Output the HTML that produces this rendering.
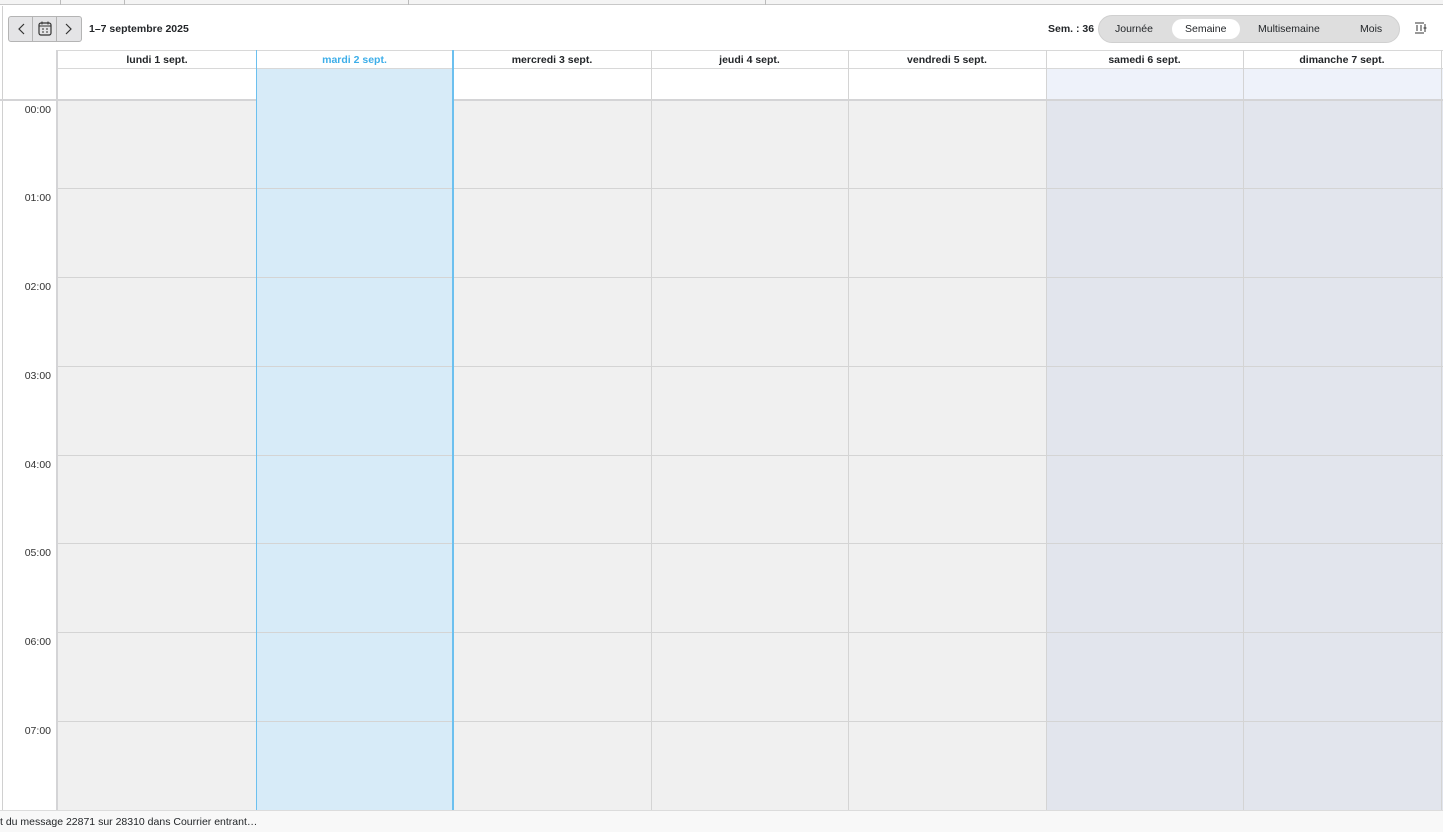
<!DOCTYPE html>
<html><head><meta charset="utf-8"><style>
*{margin:0;padding:0;box-sizing:border-box}
body{width:1443px;height:832px;overflow:hidden;background:#fff;font-family:"Liberation Sans","DejaVu Sans",sans-serif;font-size:11px;color:#232629;position:relative}
.a{position:absolute}
.hd{position:absolute;top:51px;height:18px;text-align:center;font-weight:bold;font-size:10.5px;line-height:18px}
.t{position:absolute;left:0;width:51px;text-align:right;font-size:10.5px;color:#333}
</style></head><body>
<div class="a" style="left:0;top:0;width:1443px;height:5px;background:#f4f4f4;border-bottom:1px solid #c8c8c8"></div>
<div class="a" style="left:60px;top:0;width:1px;height:5px;background:#bbb"></div>
<div class="a" style="left:124px;top:0;width:1px;height:5px;background:#bbb"></div>
<div class="a" style="left:408px;top:0;width:1px;height:5px;background:#bbb"></div>
<div class="a" style="left:765px;top:0;width:1px;height:5px;background:#bbb"></div>
<div class="a" style="left:2px;top:6px;width:1px;height:804px;background:#d0d0d0"></div>
<div class="a" style="left:8px;top:16px;width:74px;height:26px;border:1px solid #b4b4b4;border-radius:3px;background:#e4e4e6"></div>
<div class="a" style="left:32px;top:17px;width:1px;height:24px;background:#b4b4b4"></div>
<div class="a" style="left:56px;top:17px;width:1px;height:24px;background:#b4b4b4"></div>
<svg class="a" style="left:8px;top:16px" width="74" height="26"><path d="M16 8l-5 5 5 5M58 8l5 5-5 5" fill="none" stroke="#333" stroke-width="1.2"/><rect x="31" y="7" width="12" height="12" rx="2" fill="none" stroke="#333" stroke-width="1.2"/><path d="M31 10h12M34 5.5v3M40 5.5v3" stroke="#333"/><path d="M34 13h2M38 13h2M34 16h2M38 16h2" stroke="#333"/></svg>
<div class="a" style="left:89px;top:23px;font-weight:bold;font-size:10.5px">1–7 septembre 2025</div>
<div class="a" style="left:1048px;top:23px;font-weight:bold;font-size:10.5px">Sem. : 36</div>
<div class="a" style="left:1098px;top:15px;width:302px;height:28px;border-radius:14px;background:#dedede;border:1px solid #d0d0d0"></div>
<div class="a" style="left:1172px;top:19px;width:68px;height:20px;border-radius:10px;background:#fff"></div>
<div class="a" style="left:1115px;top:23px;font-size:10.5px">Journée</div>
<div class="a" style="left:1185px;top:23px;font-size:10.5px">Semaine</div>
<div class="a" style="left:1258px;top:23px;font-size:10.5px">Multisemaine</div>
<div class="a" style="left:1360px;top:23px;font-size:10.5px">Mois</div>
<svg class="a" style="left:1413px;top:21px" width="14" height="14"><path d="M2 2h9M2 12h9M4 4v6M8 4v6M12 3v8M10.5 7h3" stroke="#333" fill="none"/></svg>
<div class="a" style="left:56px;top:50px;width:2px;height:760px;background:#d4d4d6"></div>
<div class="a" style="left:58px;top:50px;width:1385px;height:1px;background:#d8d8d8"></div>
<div class="a" style="left:58px;top:68px;width:1385px;height:1px;background:#d8d8d8"></div>
<div class="a" style="left:0;top:99px;width:1443px;height:2px;background:#d4d4d6"></div>
<div class="a" style="left:58px;top:101px;width:988px;height:709px;background:#f0f0f0"></div>
<div class="a" style="left:1046px;top:101px;width:397px;height:709px;background:#e2e5ed"></div>
<div class="a" style="left:1046px;top:69px;width:397px;height:30px;background:#eef2fa"></div>
<div class="a" style="left:256px;top:69px;width:197px;height:741px;background:#d7ebf8"></div>
<div class="a" style="left:58px;top:188px;width:1385px;height:1px;background:#d4d4d4"></div>
<div class="a" style="left:58px;top:277px;width:1385px;height:1px;background:#d4d4d4"></div>
<div class="a" style="left:58px;top:366px;width:1385px;height:1px;background:#d4d4d4"></div>
<div class="a" style="left:58px;top:455px;width:1385px;height:1px;background:#d4d4d4"></div>
<div class="a" style="left:58px;top:543px;width:1385px;height:1px;background:#d4d4d4"></div>
<div class="a" style="left:58px;top:632px;width:1385px;height:1px;background:#d4d4d4"></div>
<div class="a" style="left:58px;top:721px;width:1385px;height:1px;background:#d4d4d4"></div>
<div class="a" style="left:256px;top:50px;width:1px;height:760px;background:#6cc0ef"></div>
<div class="a" style="left:452px;top:50px;width:2px;height:760px;background:#6cc0ef"></div>
<div class="a" style="left:651px;top:50px;width:1px;height:760px;background:#d4d4d4"></div>
<div class="a" style="left:848px;top:50px;width:1px;height:760px;background:#d4d4d4"></div>
<div class="a" style="left:1046px;top:50px;width:1px;height:760px;background:#d4d4d4"></div>
<div class="a" style="left:1243px;top:50px;width:1px;height:760px;background:#d4d4d4"></div>
<div class="a" style="left:1441px;top:50px;width:1px;height:760px;background:#d4d4d4"></div>
<div class="hd" style="left:58px;width:198px">lundi 1 sept.</div>
<div class="hd" style="left:256px;width:197px;color:#3daee9">mardi 2 sept.</div>
<div class="hd" style="left:453px;width:198px">mercredi 3 sept.</div>
<div class="hd" style="left:651px;width:197px">jeudi 4 sept.</div>
<div class="hd" style="left:848px;width:198px">vendredi 5 sept.</div>
<div class="hd" style="left:1046px;width:197px">samedi 6 sept.</div>
<div class="hd" style="left:1243px;width:198px">dimanche 7 sept.</div>
<div class="t" style="top:104px">00:00</div>
<div class="t" style="top:192px">01:00</div>
<div class="t" style="top:281px">02:00</div>
<div class="t" style="top:370px">03:00</div>
<div class="t" style="top:459px">04:00</div>
<div class="t" style="top:547px">05:00</div>
<div class="t" style="top:636px">06:00</div>
<div class="t" style="top:725px">07:00</div>
<div class="a" style="left:0;top:810px;width:1443px;height:22px;background:#f8f8f8;border-top:1px solid #dcdcdc;font-size:10.5px;line-height:22px">t du message 22871 sur 28310 dans Courrier entrant…</div>
</body></html>
